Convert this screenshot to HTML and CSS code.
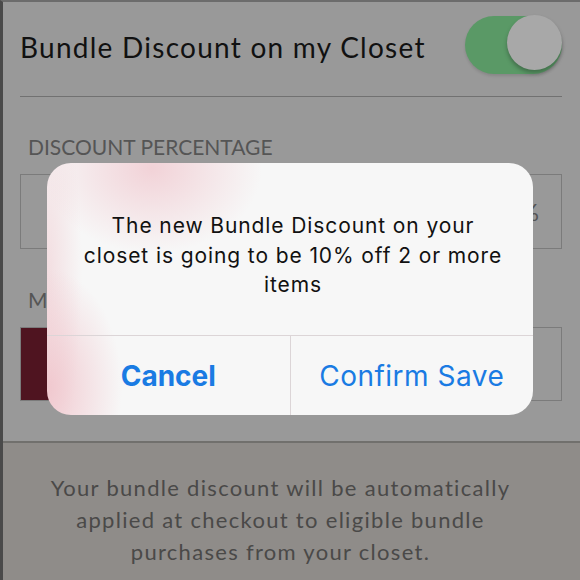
FILE: index.html
```html
<!DOCTYPE html>
<html lang="en">
<head>
<meta charset="utf-8">
<title>Bundle Discount</title>
<link rel="stylesheet" href="styles.css">
</head>
<body>
<div class="screen">
  <section class="settings">
    <div class="setting-row">
      <span class="setting-title">Bundle Discount on my Closet</span>
      <span class="switch" role="switch" aria-checked="true"><span class="switch-knob"></span></span>
    </div>
    <div class="field field--first">
      <div class="field-label">DISCOUNT PERCENTAGE</div>
      <div class="field-box">
        <span class="field-value">10</span>
        <span class="field-unit">%</span>
      </div>
    </div>
    <div class="field">
      <div class="field-label">MINIMUM ITEMS</div>
      <div class="field-box field-box--stepper">
        <span class="stepper-btn">&minus;</span>
      </div>
    </div>
  </section>
  <footer class="note">
    <p>Your bundle discount will be automatically<br>applied at checkout to eligible bundle<br>purchases from your closet.</p>
  </footer>
  <div class="alert" role="alertdialog">
    <p class="alert-message">The new Bundle Discount on your<br>closet is going to be 10% off 2 or more<br>items</p>
    <div class="alert-actions">
      <button class="alert-btn alert-btn--cancel" type="button">Cancel</button>
      <button class="alert-btn" type="button">Confirm Save</button>
    </div>
  </div>
</div>
</body>
</html>
```
FILE: styles.css
```css
* { box-sizing: border-box; }

html, body {
  margin: 0;
  padding: 0;
  background: #999999;
}

body {
  font-family: Lato, "Open Sans", sans-serif;
}

/* whole phone screen, dimmed behind the alert */
.screen {
  position: relative;
  width: 580px;
  height: 580px;
  overflow: hidden;
  display: flex;
  flex-direction: column;
  background: #999999;
  border-left: 3px solid #4a4a4a;
  border-top: 2px solid #6c6c6c;
}

.settings {
  flex: none;
  height: 439px;
  padding: 0 18px 0 17px;
}

.setting-row {
  display: flex;
  align-items: center;
  justify-content: space-between;
  padding: 14px 0 22px;
  border-bottom: 1.5px solid #717171;
}

.setting-title {
  padding-top: 4px;
  font-size: 28px;
  letter-spacing: 1.25px;
  color: #111111;
}

/* on/off switch */
.switch {
  position: relative;
  width: 97px;
  height: 58px;
  border-radius: 29px;
  background: #5a9966;
  box-shadow: 0 2px 3px rgba(0, 0, 0, 0.12);
}

.switch-knob {
  position: absolute;
  top: -1px;
  right: 0;
  width: 55px;
  height: 55px;
  border-radius: 50%;
  background: #a8a8a8;
  box-shadow: 0 3px 4px rgba(0, 0, 0, 0.28);
}

.field-label {
  padding-left: 8px;
  font-size: 21px;
  line-height: 24px;
  color: #555555;
}

.field--first { margin-top: 38px; }
.field + .field { margin-top: 39px; }

.field-box {
  display: flex;
  align-items: center;
  justify-content: space-between;
  height: 75px;
  margin-top: 15px;
  border: 1.5px solid #7b7b7b;
  padding-right: 22px;
  font-size: 24px;
  color: #555555;
}

.field-value { padding-left: 44px; }

.field-box--stepper {
  height: 74px;
  justify-content: flex-start;
}

.stepper-btn {
  align-self: stretch;
  display: flex;
  align-items: center;
  justify-content: center;
  width: 80px;
  background: #4f1420;
  color: #9a8c8f;
}

/* explanatory footer */
.note {
  flex: 1;
  margin: 0;
  background: #8f8c89;
  border-top: 2px solid #71706d;
  text-align: center;
}

.note p {
  margin: 29px 0 0;
  padding-right: 22px;
  font-size: 22px;
  line-height: 32px;
  letter-spacing: 1.3px;
  color: #4a4948;
}

/* alert dialog */
.alert {
  position: absolute;
  left: 44px;
  top: 161px;
  width: 486px;
  height: 252px;
  border-radius: 24px;
  overflow: hidden;
  font-family: Inter, "Noto Sans", sans-serif;
  background:
    radial-gradient(ellipse 110px 85px at 105px 5px, rgba(240, 198, 205, 0.75), rgba(240, 198, 205, 0)),
    radial-gradient(ellipse 75px 120px at 0 225px, rgba(240, 196, 203, 0.9), rgba(240, 196, 203, 0)),
    radial-gradient(ellipse 35px 200px at 0 110px, rgba(240, 205, 210, 0.6), rgba(240, 205, 210, 0)),
    #f7f7f7;
}

.alert-message {
  margin: 0;
  height: 173px;
  padding-top: 48px;
  padding-left: 6px;
  border-bottom: 1px solid #dcd5d7;
  text-align: center;
  font-size: 21px;
  line-height: 29.5px;
  letter-spacing: 0.9px;
  color: #111111;
}

.alert-actions {
  display: flex;
  height: 79px;
}

.alert-btn {
  flex: 1;
  margin: 0;
  padding: 0;
  border: 0;
  background: transparent;
  font-family: inherit;
  font-size: 28px;
  color: #1a7be3;
}

.alert-btn + .alert-btn {
  border-left: 1px solid #dcd5d7;
  letter-spacing: 0.5px;
}

.alert-btn--cancel {
  font-weight: 700;
}
```
